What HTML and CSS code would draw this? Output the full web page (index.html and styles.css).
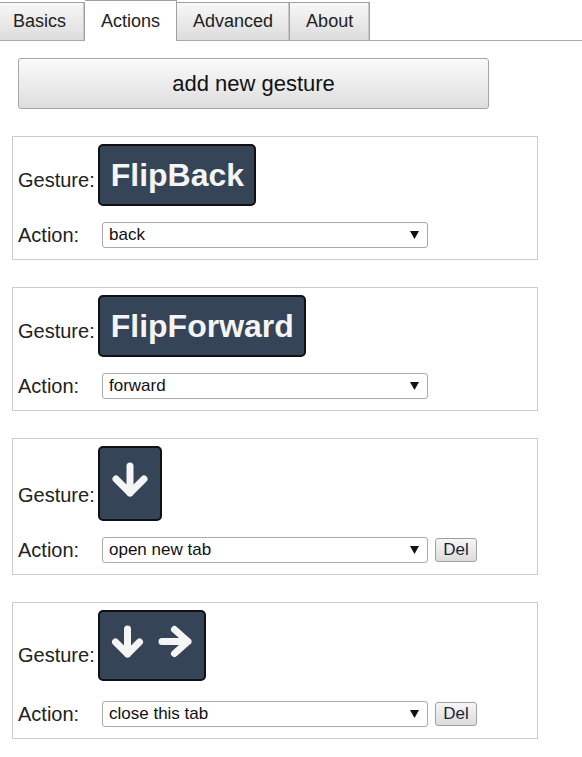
FILE: index.html
```html
<!DOCTYPE html>
<html>
<head>
<meta charset="utf-8">
<link rel="stylesheet" href="styles.css">
</head>
<body>
<div class="tabs">
  <div class="tab first">Basics</div>
  <div class="tab active">Actions</div>
  <div class="tab">Advanced</div>
  <div class="tab">About</div>
</div>

<button class="add-btn">add new gesture</button>

<div class="cards">
  <div class="card">
    <div class="gesture-row">
      <span class="label">Gesture:</span>
      <span class="badge badge-text">FlipBack</span>
    </div>
    <div class="action-row">
      <span class="label action-label">Action:</span>
      <div class="select"><span class="select-text">back</span><svg class="caret" width="9" height="8" viewBox="0 0 9 8"><polygon points="0,0 9,0 4.5,8" fill="#111"/></svg></div>
    </div>
  </div>

  <div class="card">
    <div class="gesture-row">
      <span class="label">Gesture:</span>
      <span class="badge badge-text">FlipForward</span>
    </div>
    <div class="action-row">
      <span class="label action-label">Action:</span>
      <div class="select"><span class="select-text">forward</span><svg class="caret" width="9" height="8" viewBox="0 0 9 8"><polygon points="0,0 9,0 4.5,8" fill="#111"/></svg></div>
    </div>
  </div>

  <div class="card">
    <div class="gesture-row">
      <span class="label">Gesture:</span>
      <span class="badge badge-icon">
        <svg width="60" height="71" viewBox="0 0 60 71">
          <g fill="none" stroke="#f5f5f5" stroke-width="7" stroke-linecap="round" stroke-linejoin="round">
            <path d="M30 18 V45 M16 31 L30 45 L44 31"/>
          </g>
        </svg>
      </span>
    </div>
    <div class="action-row">
      <span class="label action-label">Action:</span>
      <div class="select"><span class="select-text">open new tab</span><svg class="caret" width="9" height="8" viewBox="0 0 9 8"><polygon points="0,0 9,0 4.5,8" fill="#111"/></svg></div>
      <button class="del-btn">Del</button>
    </div>
  </div>

  <div class="card">
    <div class="gesture-row tall-gap">
      <span class="label">Gesture:</span>
      <span class="badge badge-icon">
        <svg width="104" height="67" viewBox="0 0 104 67">
          <g fill="none" stroke="#f5f5f5" stroke-width="7" stroke-linecap="round" stroke-linejoin="round">
            <path d="M27.5 17 V42 M15.5 30 L27.5 42 L39.5 30"/>
            <path d="M62 29.5 H88 M74.5 17.5 L88 29.5 L74.5 41.5"/>
          </g>
        </svg>
      </span>
    </div>
    <div class="action-row">
      <span class="label action-label">Action:</span>
      <div class="select"><span class="select-text">close this tab</span><svg class="caret" width="9" height="8" viewBox="0 0 9 8"><polygon points="0,0 9,0 4.5,8" fill="#111"/></svg></div>
      <button class="del-btn">Del</button>
    </div>
  </div>
</div>
</body>
</html>
```

FILE: styles.css
```css
html, body {
  margin: 0;
  padding: 0;
  background: #ffffff;
  font-family: "Liberation Sans", Arial, sans-serif;
  color: #222;
}

.tabs {
  display: flex;
  align-items: flex-end;
  height: 40px;
  border-bottom: 1px solid #a8a8a8;
  margin-left: -4px;
}

.tab {
  box-sizing: border-box;
  height: 38px;
  padding: 8px 16px 0 16px;
  font-size: 18px;
  line-height: 20px;
  color: #222;
  border: 1px solid #a0a0a0;
  border-bottom: none;
  border-left: none;
  background: linear-gradient(#f8f8f8, #dcdcdc);
  box-shadow: inset -1px 0 0 #c8c8c8;
}

.tab.first {
  border-left: 1px solid #a0a0a0;
  padding-right: 18px;
}

.tab.active {
  height: 41px;
  margin-bottom: -1px;
  padding-top: 10px;
  background: #ffffff;
  box-shadow: none;
  border-top: 1px solid #a0a0a0;
}

.add-btn {
  display: block;
  box-sizing: border-box;
  width: 471px;
  height: 51px;
  margin: 17px 0 0 18px;
  padding: 0;
  font-family: "Liberation Sans", Arial, sans-serif;
  font-size: 22px;
  color: #111;
  border: 1px solid #a6a6a6;
  border-radius: 3px;
  background: linear-gradient(#fafafa, #dedede);
}

.cards {
  display: flex;
  flex-direction: column;
  gap: 27px;
  margin: 27px 0 0 12px;
  width: 526px;
}

.card {
  box-sizing: border-box;
  border: 1px solid #cccccc;
  padding: 7px 5px 11px 5px;
}

.gesture-row {
  display: flex;
  align-items: flex-end;
}

.gesture-row.tall-gap {
  padding-bottom: 4px;
}

.label {
  font-size: 20px;
  line-height: 23px;
  color: #222;
}

.gesture-row .label {
  margin-bottom: 14px;
  margin-right: 3px;
}

.badge {
  box-sizing: border-box;
  display: inline-block;
  background: #354456;
  border: 2px solid #111;
  border-radius: 5px;
}

.badge-text {
  padding: 11px 10px 10px 11px;
  font-size: 32px;
  line-height: 37px;
  font-weight: bold;
  color: #f4f4f4;
}

.badge-icon svg {
  display: block;
}

.action-row {
  display: flex;
  align-items: center;
  margin-top: 16px;
}

.action-label {
  width: 84px;
}

.select {
  box-sizing: border-box;
  width: 326px;
  height: 26px;
  display: flex;
  align-items: center;
  border: 1px solid #a9a9a9;
  border-radius: 3px;
  padding: 0 8px 0 6px;
  background: #fff;
}

.select-text {
  flex: 1;
  font-size: 17px;
  line-height: 20px;
  color: #111;
}

.caret {
  display: block;
}

.del-btn {
  box-sizing: border-box;
  width: 42px;
  height: 24px;
  margin-left: 7px;
  padding: 0;
  font-family: "Liberation Sans", Arial, sans-serif;
  font-size: 17px;
  color: #1f1f3a;
  border: 1px solid #a0a0a0;
  border-radius: 3px;
  background: linear-gradient(#f6f6f6, #dcdcdc);
}
```
